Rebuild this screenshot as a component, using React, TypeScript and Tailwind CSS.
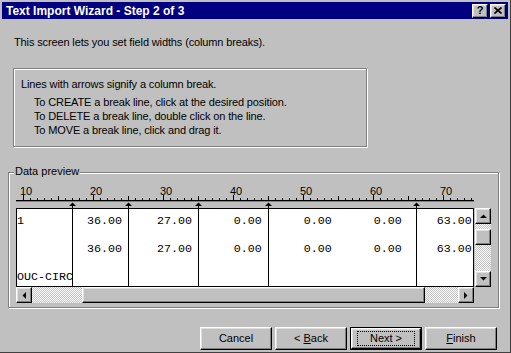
import React from 'react';

const raised =
  'border border-t-white border-l-white border-b-black border-r-black shadow-[inset_-1px_-1px_0_#808080,inset_1px_1px_0_#dfdfdf] bg-[#c0c0c0]';
const checker =
  'bg-[image:repeating-conic-gradient(#ffffff_0_25%,#c0c0c0_0_50%)] bg-[length:2px_2px]';

const breaks = [72, 128, 198, 268, 416];

const rows = [
  '1         36.00     27.00      0.00      0.00      0.00     63.00',
  '          36.00     27.00      0.00      0.00      0.00     63.00',
  'OUC-CIRC',
];

function Arrow({ dir }: { dir: 'up' | 'down' | 'left' | 'right' }) {
  const pts = {
    up: '0,4 7,4 3.5,0.5',
    down: '0,0 7,0 3.5,3.5',
    left: '4,0 4,7 0.5,3.5',
    right: '0,0 0,7 3.5,3.5',
  }[dir];
  const w = dir === 'up' || dir === 'down' ? 7 : 4;
  const h = dir === 'up' || dir === 'down' ? 4 : 7;
  return (
    <svg width={w} height={h} viewBox={`0 0 ${w} ${h}`}>
      <polygon points={pts} fill="#000" />
    </svg>
  );
}

function Ruler() {
  const ticks = [];
  // ruler origin at x=16; "10" tick sits at x=23
  for (let i = 0; i <= 64; i++) {
    const x = 7 + i * 7;
    const col = 10 + i;
    let top = 15;
    if (col % 10 === 0) top = 12;
    else if (col % 5 === 0) top = 13;
    ticks.push(<line key={i} x1={x + 0.5} x2={x + 0.5} y1={top} y2={17} stroke="#000" />);
  }
  const labels = [10, 20, 30, 40, 50, 60, 70];
  return (
    <svg width={458} height={25} className="block">
      {labels.map((n, i) => (
        <text
          key={n}
          x={4 + i * 70}
          y={12}
          fontSize={11}
          fontFamily="'Liberation Sans', Arial, sans-serif"
          fill="#000"
        >
          {n}
        </text>
      ))}
      {ticks}
      <line x1={0} x2={458} y1={17.5} y2={17.5} stroke="#000" />
      <line x1={0} x2={458} y1={18.5} y2={18.5} stroke="#808080" />
    </svg>
  );
}

function Button({ children, isDefault }: { children: React.ReactNode; isDefault?: boolean }) {
  if (isDefault) {
    return (
      <div className="w-[72px] h-[23px] border border-black">
        <div className={`${raised} w-full h-full flex items-center justify-center`}>
          <div className="border border-dotted border-black px-[10px] leading-[13px] w-[58px] h-[15px] flex items-center justify-center">
            {children}
          </div>
        </div>
      </div>
    );
  }
  return (
    <div className={`${raised} w-[72px] h-[23px] flex items-center justify-center`}>
      {children}
    </div>
  );
}

export default function App() {
  return (
    <div
      className="w-[511px] h-[353px] bg-[#c0c0c0] pt-[2px] pl-[2px] flex flex-col text-[11px] text-black overflow-hidden border-r border-b border-r-[#404040] border-b-[#404040]"
      style={{ fontFamily: "'Liberation Sans', Arial, sans-serif" }}
    >
      {/* title bar */}
      <div className="w-[506px] h-[17px] bg-[#000080] flex items-center justify-between pl-[4px] pr-[2px]">
        <span className="text-white font-bold text-[12px] leading-none">
          Text Import Wizard - Step 2 of 3
        </span>
        <div className="flex gap-[2px]">
          <div className={`${raised} w-[16px] h-[14px] flex items-center justify-center font-bold text-[11px] leading-none`}>
            ?
          </div>
          <div className={`${raised} w-[16px] h-[14px] flex items-center justify-center`}>
            <svg width="8" height="7" viewBox="0 0 8 7">
              <path d="M0.5 0.5 L7.5 6.5 M7.5 0.5 L0.5 6.5" stroke="#000" strokeWidth="1.6" />
            </svg>
          </div>
        </div>
      </div>

      <div className="mt-[17px] ml-[12px] leading-[13px] tracking-[-0.13px]">
        This screen lets you set field widths (column breaks).
      </div>

      {/* instructions */}
      <div className="mt-[19px] ml-[11px] w-[354px] h-[79px] border border-[#808080] shadow-[1px_1px_0_#ffffff,inset_1px_1px_0_#ffffff] pt-[8px] pl-[7px] leading-[14px] tracking-[-0.13px]">
        <div>Lines with arrows signify a column break.</div>
        <div className="mt-[4px] pl-[13px]">
          <div>To CREATE a break line, click at the desired position.</div>
          <div>To DELETE a break line, double click on the line.</div>
          <div>To MOVE a break line, click and drag it.</div>
        </div>
      </div>

      {/* data preview */}
      <div className="relative mt-[25px] ml-[6px] w-[491px] h-[136px] border border-[#808080] shadow-[1px_1px_0_#ffffff,inset_1px_1px_0_#ffffff] pt-[10px] pl-[7px]">
        <span className="absolute -top-[8px] left-[5px] bg-[#c0c0c0] px-[1px] leading-[13px]">
          Data preview
        </span>

        <div className="relative">
          <Ruler />
          <div className="flex">
            <div className="w-[458px] h-[79px] border border-black bg-white pt-[5px] whitespace-pre text-[11.67px]" style={{ fontFamily: "'Liberation Mono', 'Courier New', monospace" }}>
              {rows.map((r, i) => (
                <div key={i} className="h-[28px] leading-[14px]">
                  {r}
                </div>
              ))}
            </div>
            <div className="ml-[1px] w-[16px] h-[79px] flex flex-col">
              <div className={`${raised} h-[16px] flex items-center justify-center`}>
                <Arrow dir="up" />
              </div>
              <div className={`${checker} h-[5px]`} />
              <div className={`${raised} h-[16px]`} />
              <div className={`${checker} flex-1`} />
              <div className={`${raised} h-[16px] flex items-center justify-center`}>
                <Arrow dir="down" />
              </div>
            </div>
          </div>
          <div className="flex w-[458px] h-[16px]">
            <div className={`${raised} w-[16px] flex items-center justify-center`}>
              <Arrow dir="left" />
            </div>
            <div className={`${checker} w-[50px]`} />
            <div className={`${raised} w-[343px]`} />
            <div className={`${checker} flex-1`} />
            <div className={`${raised} w-[16px] flex items-center justify-center`}>
              <Arrow dir="right" />
            </div>
          </div>

          {/* column break lines */}
          {breaks.map((x) => (
            <div key={x} className="absolute top-[19px] h-[85px] flex flex-col items-center" style={{ left: x - 16 - 3 }}>
              <Arrow dir="up" />
              <div className="w-px flex-1 bg-black" />
            </div>
          ))}
        </div>
      </div>

      <div className="mt-[19px] ml-[198px] flex gap-[3px]">
        <Button>Cancel</Button>
        <Button>
          &lt; <span className="underline ml-[3px]">B</span>ack
        </Button>
        <Button isDefault>Next &gt;</Button>
        <Button>
          <span className="underline">F</span>inish
        </Button>
      </div>
    </div>
  );
}
